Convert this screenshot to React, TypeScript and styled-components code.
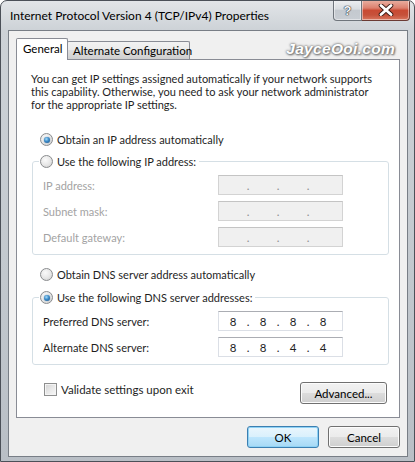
import React from 'react';
import styled, { createGlobalStyle } from 'styled-components';

const FONT = `Lato, "Liberation Sans", Arial, sans-serif`;

const Global = createGlobalStyle`
  html, body { margin: 0; padding: 0; background: #ffffff; }
  body {
    font-family: ${FONT};
    font-size: 11.5px;
    color: #1e1e1e;
  }
  * { box-sizing: border-box; }
`;

const Window = styled.div`
  position: relative;
  width: 415px;
  height: 462px;
  border: 1px solid #4b5058;
  border-radius: 7px 7px 0 0;
  background: linear-gradient(to bottom, #e2e5e8 0px, #cdd2d7 29px, #c2c8ce 60%, #b9bfc6 100%);
  display: flex;
  flex-direction: column;
  overflow: hidden;
`;

const TitleBar = styled.div`
  height: 29px;
  flex: none;
  display: flex;
  align-items: flex-start;
  justify-content: space-between;
  padding-left: 9px;
  padding-right: 4px;
`;

const Title = styled.div`
  line-height: 29px;
  font-size: 12px;
  color: #000;
  white-space: nowrap;
`;

const Caption = styled.div`
  display: flex;
  margin-top: -1px;
`;

const CaptionButton = styled.div<{ $close?: boolean }>`
  height: 21px;
  width: ${p => (p.$close ? '48px' : '29px')};
  border: 1px solid ${p => (p.$close ? '#6b3a33' : '#6f757c')};
  border-top: none;
  border-left: ${p => (p.$close ? 'none' : '1px solid #6f757c')};
  border-radius: ${p => (p.$close ? '0 0 4px 0' : '0 0 0 4px')};
  background: ${p =>
    p.$close
      ? 'linear-gradient(to bottom, #eab2a4 0%, #dc806e 40%, #c94a33 52%, #c6513a 75%, #d9775f 100%)'
      : 'linear-gradient(to bottom, #eef0f2 0%, #d9dde1 45%, #c4c9cf 52%, #c8cdd3 100%)'};
  box-shadow: inset 0 0 0 1px rgba(255, 255, 255, 0.45);
  display: flex;
  align-items: center;
  justify-content: center;
`;

const HelpGlyph = styled.span`
  font-family: "Liberation Sans", Arial, sans-serif;
  font-weight: bold;
  font-size: 13px;
  color: #f4f6f8;
  text-shadow: 0 0 1px #2b3038, 0 0 1px #2b3038, 0 0 1px #2b3038;
`;

const Client = styled.div`
  flex: 1;
  margin: 0 6px 5px 7px;
  border: 1px solid #787e86;
  background: #f0f0f0;
  padding: 7px 7px 8px 7px;
  display: flex;
  flex-direction: column;
`;

const TabStrip = styled.div`
  height: 21px;
  display: flex;
  align-items: flex-end;
`;

const Tab = styled.div<{ $active?: boolean; $w: number }>`
  position: relative;
  z-index: ${p => (p.$active ? 1 : 0)};
  width: ${p => p.$w}px;
  height: ${p => (p.$active ? '22px' : '18px')};
  margin-bottom: ${p => (p.$active ? '-1px' : '0')};
  margin-left: ${p => (p.$active ? '0' : '-1px')};
  padding: 0 ${p => (p.$active ? '6px' : '5px')};
  border: 1px solid #898c95;
  border-bottom: none;
  border-radius: 2px 2px 0 0;
  background: ${p =>
    p.$active
      ? '#ffffff'
      : 'linear-gradient(to bottom, #f2f2f2 0%, #ebebeb 50%, #dddddd 50%, #cfcfcf 100%)'};
  line-height: ${p => (p.$active ? '20px' : '17px')};
  font-size: 11.5px;
  color: #000;
  white-space: nowrap;
`;

const Watermark = styled.div`
  position: absolute;
  top: 39px;
  right: 19px;
  font-family: "Liberation Sans", Arial, sans-serif;
  font-weight: bold;
  font-style: italic;
  font-size: 15.5px;
  color: #ffffff;
  text-shadow: 0 0 2px #6a6a6a, 0 0 3px #8a8a8a, 1px 1px 2px #707070;
  letter-spacing: 0.3px;
`;

const Panel = styled.div`
  height: 359px;
  flex: none;
  border: 1px solid #898c95;
  background: #ffffff;
  padding: 12px 10px 0 14px;
  display: flex;
  flex-direction: column;
`;

const Intro = styled.p`
  margin: 0;
  font-size: 11px;
  line-height: 13px;
  color: #1e1e1e;
  white-space: nowrap;
`;

const OptionRow = styled.label<{ $mt: number }>`
  display: flex;
  align-items: center;
  height: 15px;
  margin-top: ${p => p.$mt}px;
  margin-left: 9px;
  gap: 4px;
  font-size: 11px;
  color: #1e1e1e;
`;

const RadioDot = styled.span<{ $checked?: boolean }>`
  width: 13px;
  height: 13px;
  flex: none;
  border-radius: 50%;
  border: 1px solid #8a8c8e;
  background: radial-gradient(circle at 40% 35%, #fafafa 0%, #e6e6e6 55%, #c8c8c8 100%);
  display: flex;
  align-items: center;
  justify-content: center;
  &::after {
    content: '';
    display: ${p => (p.$checked ? 'block' : 'none')};
    width: 6px;
    height: 6px;
    border-radius: 50%;
    background: radial-gradient(circle at 40% 35%, #a6dcfa 0%, #3a8ac7 45%, #1b4f86 100%);
    box-shadow: 0 0 1px #174f7f;
  }
`;

const Group = styled.fieldset<{ $mt: number }>`
  margin: ${p => p.$mt}px 0 0 1px;
  padding: 6px 0 7px 10px;
  border: 1px solid #d5dfe5;
  border-radius: 3px;
  display: flex;
  flex-direction: column;
  gap: 6px;
  min-width: 0;
`;

const Legend = styled.legend`
  margin-left: -4px;
  padding: 0 3px 0 1px;
  height: 15px;
  display: flex;
  align-items: center;
  gap: 4px;
  font-size: 11px;
  color: #1e1e1e;
`;

const FieldRow = styled.div<{ $disabled?: boolean }>`
  display: flex;
  align-items: center;
  height: 20px;
  font-size: 11px;
  color: ${p => (p.$disabled ? '#a3a3a3' : '#1e1e1e')};
`;

const FieldLabel = styled.span`
  width: 175px;
  flex: none;
`;

const IpBox = styled.div<{ $disabled?: boolean }>`
  width: 125px;
  height: 20px;
  border: 1px solid ${p => (p.$disabled ? '#d3d3d3' : '#dbdfe6')};
  border-top-color: ${p => (p.$disabled ? '#c4c4c4' : '#abadb3')};
  background: ${p => (p.$disabled ? '#f0f0f0' : '#ffffff')};
  display: flex;
  align-items: center;
  padding-left: 3px;
  font-size: 11.5px;
  color: ${p => (p.$disabled ? '#8e8e8e' : '#1e1e1e')};
`;

const Octet = styled.span`
  width: 22px;
  text-align: center;
`;

const Dot = styled.span`
  width: 8px;
  text-align: center;
`;

const BottomRow = styled.div`
  display: flex;
  justify-content: space-between;
  align-items: flex-start;
  padding-top: 17px;
  margin-left: 13px;
  margin-right: 2px;
`;

const CheckLabel = styled.label`
  display: flex;
  align-items: center;
  gap: 4px;
  height: 15px;
  font-size: 11.5px;
  color: #1e1e1e;
`;

const CheckBox = styled.span`
  width: 13px;
  height: 13px;
  flex: none;
  border: 1px solid #8e8f8f;
  background: linear-gradient(135deg, #d2d2d2 0%, #e8e8e8 50%, #f8f8f8 100%);
  box-shadow: inset 0 0 0 1px #f4f4f4;
`;

const Button = styled.button<{ $default?: boolean; $w: number }>`
  width: ${p => p.$w}px;
  height: 22px;
  padding: 0;
  font-family: ${FONT};
  font-size: 11.5px;
  color: #000;
  border-radius: 3px;
  border: 1px solid ${p => (p.$default ? '#3c7fb1' : '#707070')};
  background: ${p =>
    p.$default
      ? 'linear-gradient(to bottom, #eaf6fd 0%, #d9f0fc 50%, #bee6fd 50%, #a7d9f5 100%)'
      : 'linear-gradient(to bottom, #f2f2f2 0%, #ebebeb 50%, #dddddd 50%, #cfcfcf 100%)'};
  box-shadow: inset 0 0 0 1px ${p => (p.$default ? '#8fd2f5' : '#fcfcfc')};
`;

const Footer = styled.div`
  display: flex;
  justify-content: flex-end;
  gap: 9px;
  margin-top: 8px;
`;

type IpProps = { value?: string[]; disabled?: boolean };

const IpField: React.FC<IpProps> = ({ value = ['', '', '', ''], disabled }) => (
  <IpBox $disabled={disabled}>
    {value.map((v, i) => (
      <React.Fragment key={i}>
        <Octet>{v}</Octet>
        {i < 3 && <Dot>.</Dot>}
      </React.Fragment>
    ))}
  </IpBox>
);

const CloseX = () => (
  <svg width="16" height="12" viewBox="0 0 16 12">
    <path
      d="M3 1.5 L13 10.5 M13 1.5 L3 10.5"
      stroke="#3a1a14"
      strokeWidth="4.6"
      fill="none"
      strokeLinecap="round"
    />
    <path
      d="M3 1.5 L13 10.5 M13 1.5 L3 10.5"
      stroke="#ffffff"
      strokeWidth="2.8"
      fill="none"
      strokeLinecap="round"
    />
  </svg>
);

export default function App() {
  return (
    <>
      <Global />
      <Window>
        <TitleBar>
          <Title>Internet Protocol Version 4 (TCP/IPv4) Properties</Title>
          <Caption>
            <CaptionButton>
              <HelpGlyph>?</HelpGlyph>
            </CaptionButton>
            <CaptionButton $close>
              <CloseX />
            </CaptionButton>
          </Caption>
        </TitleBar>
        <Client>
          <TabStrip>
            <Tab $active $w={52}>General</Tab>
            <Tab $w={123}>Alternate Configuration</Tab>
          </TabStrip>
          <Panel>
            <Intro>
              You can get IP settings assigned automatically if your network supports
              <br />
              this capability. Otherwise, you need to ask your network administrator
              <br />
              for the appropriate IP settings.
            </Intro>
            <OptionRow $mt={21}>
              <RadioDot $checked />
              Obtain an IP address automatically
            </OptionRow>
            <Group $mt={7}>
              <Legend>
                <RadioDot />
                Use the following IP address:
              </Legend>
              <FieldRow $disabled>
                <FieldLabel>IP address:</FieldLabel>
                <IpField disabled />
              </FieldRow>
              <FieldRow $disabled>
                <FieldLabel>Subnet mask:</FieldLabel>
                <IpField disabled />
              </FieldRow>
              <FieldRow $disabled>
                <FieldLabel>Default gateway:</FieldLabel>
                <IpField disabled />
              </FieldRow>
            </Group>
            <OptionRow $mt={12}>
              <RadioDot />
              Obtain DNS server address automatically
            </OptionRow>
            <Group $mt={8}>
              <Legend>
                <RadioDot $checked />
                Use the following DNS server addresses:
              </Legend>
              <FieldRow>
                <FieldLabel>Preferred DNS server:</FieldLabel>
                <IpField value={['8', '8', '8', '8']} />
              </FieldRow>
              <FieldRow>
                <FieldLabel>Alternate DNS server:</FieldLabel>
                <IpField value={['8', '8', '4', '4']} />
              </FieldRow>
            </Group>
            <BottomRow>
              <CheckLabel>
                <CheckBox />
                Validate settings upon exit
              </CheckLabel>
              <Button $w={87}>Advanced...</Button>
            </BottomRow>
          </Panel>
          <Footer>
            <Button $default $w={72}>
              OK
            </Button>
            <Button $w={72}>Cancel</Button>
          </Footer>
        </Client>
        <Watermark>JayceOoi.com</Watermark>
      </Window>
    </>
  );
}
